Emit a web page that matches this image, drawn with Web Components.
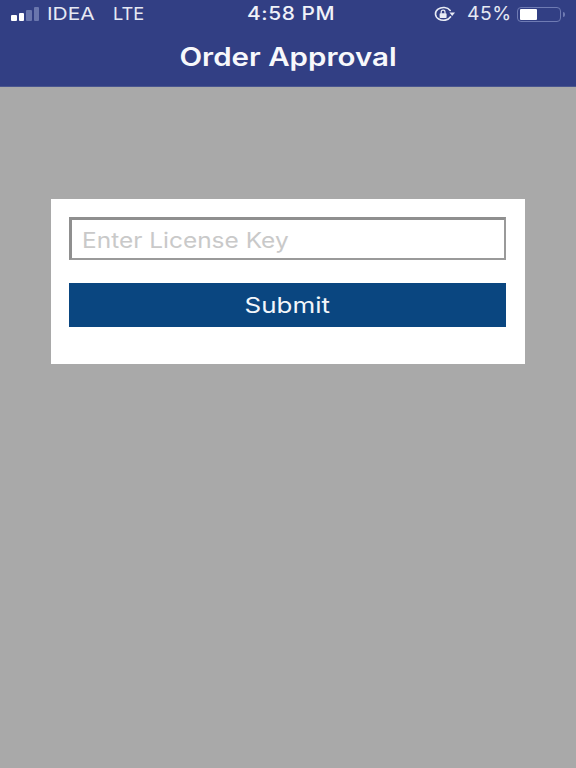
<!DOCTYPE html>
<html lang="en">
<head>
<meta charset="utf-8">
<title>Order Approval</title>
<style>
html,body{margin:0;padding:0;height:100%;background:#a9a9a9;font-family:Inter,"Liberation Sans",Arial,sans-serif;}
body{width:576px;height:768px;overflow:hidden;display:flex;flex-direction:column;}
</style>
</head>
<body>
<app-header title-text="Order Approval"></app-header>
<license-card></license-card>
<script>
class StatusBar extends HTMLElement{
  constructor(){super();this.attachShadow({mode:'open'}).innerHTML=`
  <style>
  :host{display:flex;align-items:center;height:28px;padding:0 0 0 11px;color:#e6e9f3;font-size:17px;line-height:28px;box-sizing:border-box;white-space:nowrap;}
  .sig{display:flex;align-items:flex-end;gap:2px;width:30px;height:14px;margin:0 6px 0 0;flex:none;}
  .sig i{display:block;width:5.5px;border-radius:1px;background:#fff;}
  .sig i:nth-child(1){height:6.5px}
  .sig i:nth-child(2){height:8px}
  .sig i:nth-child(3){height:11px;background:#6a76ad}
  .sig i:nth-child(4){height:14px;background:#6a76ad}
  .t{display:inline-block;transform-origin:left center;flex:none;}
  .idea{width:66px;transform:scaleX(1.23);}
  .lte{width:134px;transform:scaleX(1.07);}
  .time{width:187px;font-weight:500;font-size:18px;letter-spacing:.5px;color:#f0f2f8;transform:scaleX(1.16);}
  svg.lock{width:22px;height:18px;margin:0 11px 0 0;flex:none;}
  .pct{width:50px;font-size:18px;letter-spacing:.5px;transform:scaleX(1.07);}
  .bat{width:44px;height:15px;box-sizing:border-box;border:1.5px solid #6f7bb3;border-radius:4px;padding:1px 2px;flex:none;display:flex;}
  .bat b{display:block;width:17px;background:#fff;border-radius:1px;}
  .nub{width:2px;height:5px;margin-left:2px;background:#6f7bb3;border-radius:0 2px 2px 0;flex:none;}
  </style>
  <span class="sig"><i></i><i></i><i></i><i></i></span>
  <span class="t idea">IDEA</span>
  <span class="t lte">LTE</span>
  <span class="t time">4:58 PM</span>
  <svg class="lock" viewBox="0 0 22 18" fill="none" stroke="#e9ecf5" stroke-width="1.6" stroke-linecap="round">
    <path d="M16.2 5.4A8 6.4 0 1 0 16.6 11.8"/>
    <path d="M15.4 7.4H21L18.2 11z" fill="#e9ecf5" stroke="none"/>
    <rect x="5.6" y="8.2" width="7" height="4.8" rx=".8" fill="#e9ecf5" stroke="none"/>
    <path d="M7.2 8.2V7a1.9 1.9 0 0 1 3.8 0v1.2" stroke-width="1.2"/>
  </svg>
  <span class="t pct">45%</span>
  <span class="bat"><b></b></span><span class="nub"></span>`;}
}
class AppHeader extends HTMLElement{
  constructor(){super();this.attachShadow({mode:'open'}).innerHTML=`
  <style>
  :host{display:block;height:87px;flex:none;background:#323f84;border-bottom:1px solid #4a568f;box-sizing:border-box;}
  h1{margin:0;height:58px;display:flex;align-items:center;justify-content:center;color:#f7f8fb;font-size:25px;font-weight:600;box-sizing:border-box;}
  h1 span{display:inline-block;transform:scaleX(1.18);}
  </style>
  <status-bar></status-bar>
  <h1><span id="t"></span></h1>`;}
  connectedCallback(){this.shadowRoot.getElementById('t').textContent=this.getAttribute('title-text');}
}
class LicenseCard extends HTMLElement{
  constructor(){super();this.attachShadow({mode:'open'}).innerHTML=`
  <style>
  :host{display:block;width:474px;height:165px;margin:112px 0 0 51px;background:#fff;box-sizing:border-box;padding:18px 19px 0 18px;flex:none;}
  .input{display:flex;align-items:center;height:43px;box-sizing:border-box;border:2px solid #9a9a9a;border-top:3px solid #8f8f8f;border-left:3px solid #8f8f8f;padding:2px 0 0 10px;color:#c9c9c9;font-size:21px;}
  .input span{display:inline-block;transform:scaleX(1.164);transform-origin:left center;}
  button{display:flex;align-items:center;justify-content:center;width:100%;height:44px;margin-top:23px;border:0;padding:0;background:#0a4680;color:#f2f6fa;font:22px Inter,"Liberation Sans",Arial,sans-serif;}
  button span{display:inline-block;transform:scaleX(1.18);}
  </style>
  <div class="input"><span>Enter License Key</span></div>
  <button><span>Submit</span></button>`;}
}
customElements.define('status-bar',StatusBar);
customElements.define('app-header',AppHeader);
customElements.define('license-card',LicenseCard);
</script>
</body>
</html>
